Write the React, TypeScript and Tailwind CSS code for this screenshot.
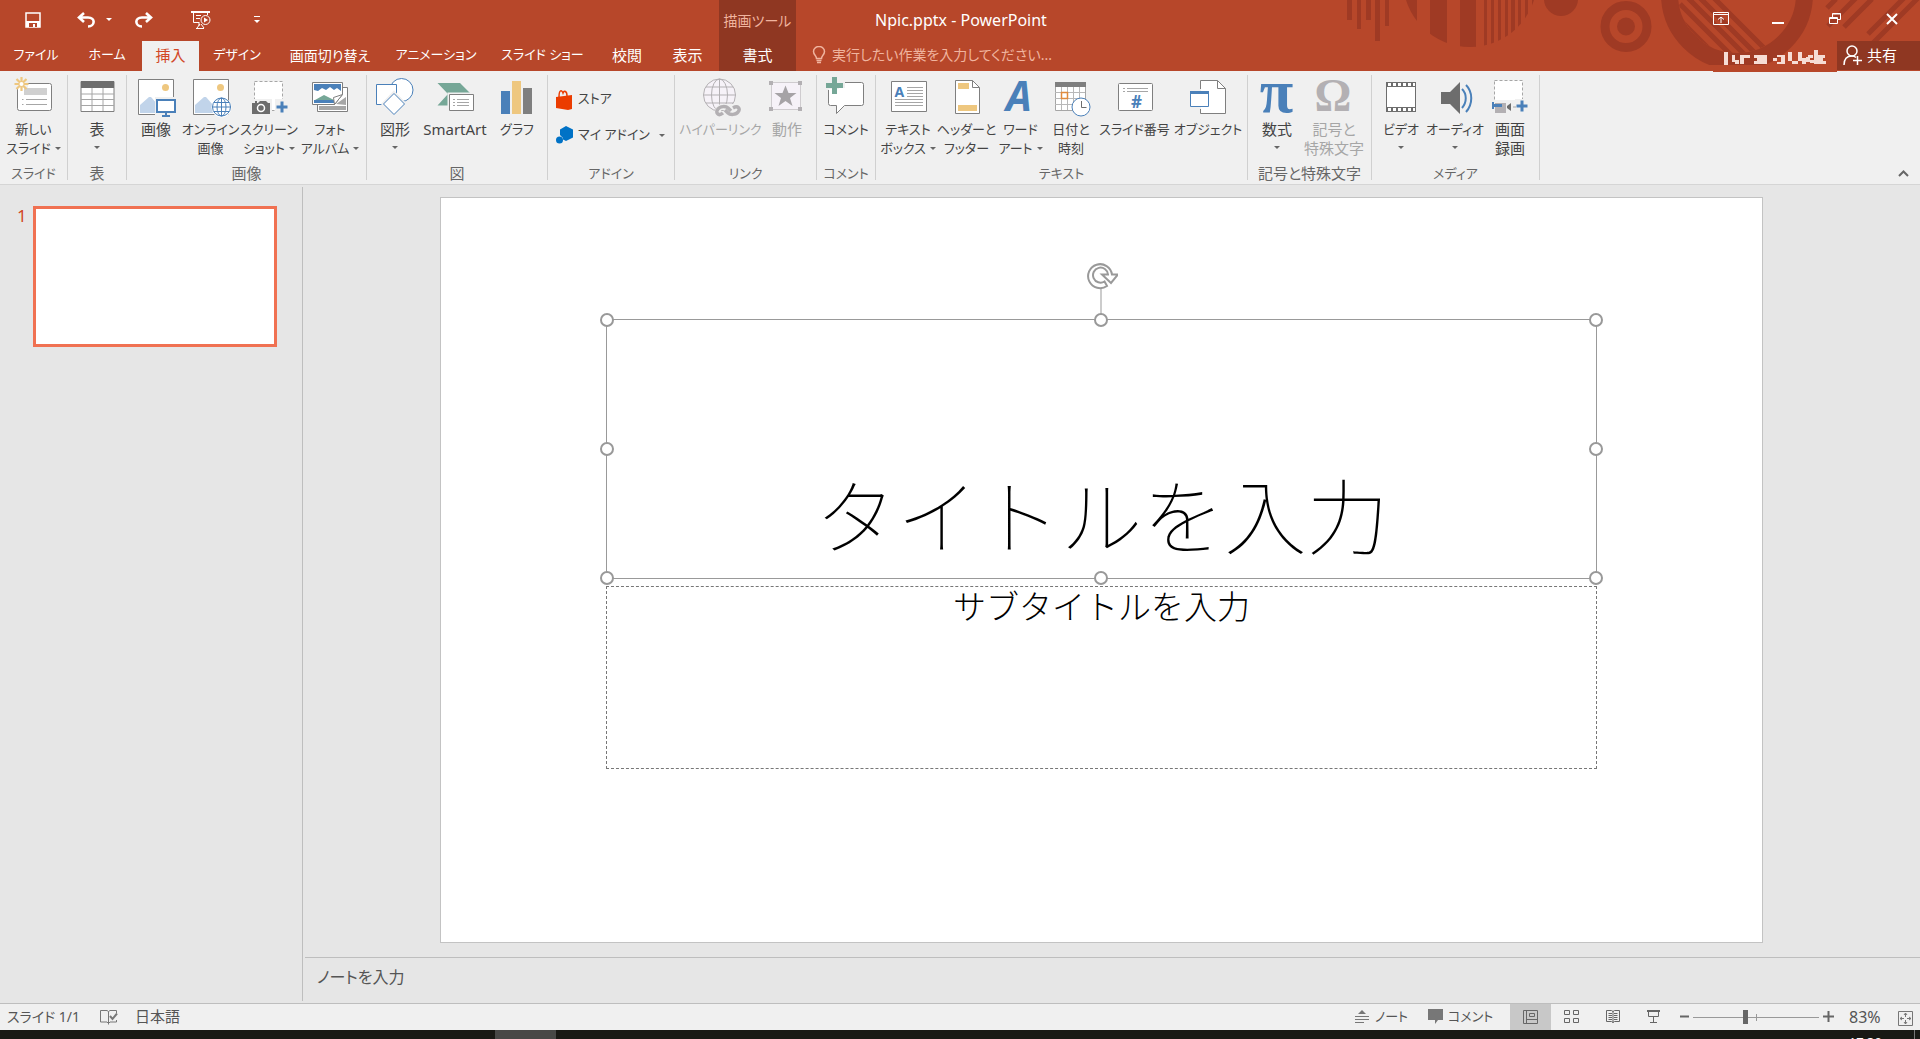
import { useState } from "react";
import type { ReactNode } from "react";

interface ToolProps {
  icon: ReactNode;
  lines: string[];
  width: string;
  small?: boolean;
  caret?: boolean;
  disabled?: boolean;
}

const Caret = ({ className = "" }: { className?: string }) => (
  <svg width="6" height="3" viewBox="0 0 6 3" className={`inline-block shrink-0 ${className}`} aria-hidden="true">
    <path d="M0 0h6L3 3z" fill="currentColor" />
  </svg>
);

const Icon = ({ children }: { children: ReactNode }) => (
  <svg width="40" height="40" viewBox="0 0 40 40" fill="none" className="block overflow-visible" aria-hidden="true">
    {children}
  </svg>
);

const Tool = ({ icon, lines, width, small, caret, disabled }: ToolProps) => (
  <button
    disabled={disabled}
    className={`flex shrink-0 flex-col items-center pt-[2px] ${width} ${disabled ? "text-[#a6a6a6]" : "text-[#444444]"}`}
  >
    {icon}
    <span
      className={`mt-[3px] flex flex-col items-center whitespace-nowrap leading-[19px] ${small ? "text-[13px]" : "text-[15px]"}`}
    >
      {lines.map((line, i) => (
        <span key={line} className="flex h-[19px] items-center">
          {line}
          {caret && i === 1 && <Caret className="ml-1 text-[#666666]" />}
        </span>
      ))}
      {caret && lines.length === 1 && (
        <span className="flex h-[19px] items-center pb-[2px]">
          <Caret className="text-[#666666]" />
        </span>
      )}
    </span>
  </button>
);

const Group = ({
  label,
  width,
  small,
  children,
}: {
  label: string;
  width: string;
  small?: boolean;
  children: ReactNode;
}) => (
  <section
    aria-label={label}
    className={`flex h-[105px] shrink-0 flex-col justify-between border-r border-[#d0d0d0] ${width}`}
  >
    <div className="flex">{children}</div>
    <div
      className={`-mb-px whitespace-nowrap text-center leading-[15px] text-[#666666] ${small ? "text-[13px]" : "text-[15px]"}`}
    >
      {label}
    </div>
  </section>
);

const Picture = () => (
  <>
    <path d="M2.5 2.5h35v35h-35z" fill="#fff" stroke="#7f7f7f" />
    <circle cx="29.5" cy="10.5" r="3.5" fill="#eec77f" />
    <path d="M4 36V28l9-8h2l14 16z" fill="#c1d4ea" />
  </>
);

const Globe = ({ cx, cy, r, color, fill }: { cx: number; cy: number; r: number; color: string; fill: string }) => (
  <g stroke={color} fill="none">
    <circle cx={cx} cy={cy} r={r} fill={fill} />
    <ellipse cx={cx} cy={cy} rx={r / 2} ry={r} />
    <path
      d={`M${cx - r} ${cy}h${r * 2}M${cx} ${cy - r}v${r * 2}M${cx - r * 0.86} ${cy - r / 2}h${r * 1.72}M${cx - r * 0.86} ${cy + r / 2}h${r * 1.72}`}
    />
  </g>
);

const NewSlideIcon = () => (
  <Icon>
    <rect x="3.5" y="6.5" width="34" height="27" rx="2" fill="#fff" stroke="#7f7f7f" />
    <path d="M10 11h23v7H10z" fill="#d0d0d0" />
    <path d="M8 22.500h1.500M8 27.500h1.500M12 22.500h21M12 27.500h21" stroke="#a6a6a6" />
    <path d="M0 0h14v11H0z" fill="#f0f0f0" />
    <path d="M7.500 0v14M.500 7h14M2.500 2l10 10M12.500 2l-10 10" stroke="#eec77f" strokeWidth="2.200" />
    <circle cx="7.500" cy="7" r="2" fill="#fff" />
  </Icon>
);

const TableIcon = () => (
  <Icon>
    <path d="M4 4.500h33v30H4z" fill="#fff" stroke="#7f7f7f" />
    <path d="M4 4h33v7H4z" fill="#6d6d6d" />
    <path d="M15 11v23M26 11v23M4 17h33M4 22.500h33M4 28.500h33" stroke="#a6a6a6" />
  </Icon>
);

const PictureIcon = () => (
  <Icon>
    <Picture />
    <path d="M19 20h21v18H19z" fill="#f0f0f0" />
    <path d="M21 23h18v12H21z" fill="#fff" stroke="#4a80b9" strokeWidth="2" />
    <path d="M30 36v3M26 39h8" stroke="#4a80b9" strokeWidth="2" />
  </Icon>
);

const OnlinePictureIcon = () => (
  <Icon>
    <Picture />
    <circle cx="30.500" cy="30.500" r="10" fill="#fff" />
    <Globe cx={30.5} cy={30} r={9} color="#4a80b9" fill="#fff" />
  </Icon>
);

const ScreenshotIcon = () => (
  <Icon>
    <path d="M5.500 4.500h28v29h-28z" fill="#fff" stroke="#a6a6a6" strokeDasharray="3 2" />
    <path d="M0 22h23v18H0zM26 22h14v15H26z" fill="#f0f0f0" />
    <path d="M3 26h3v-2h2v2h1l2-2h6l2 2h2v11H3z" fill="#6d6d6d" />
    <circle cx="12" cy="31" r="3.500" stroke="#fff" strokeWidth="1.500" />
    <path d="M33 24.500v11M27.500 30h11" stroke="#4a80b9" strokeWidth="3" />
  </Icon>
);

const AlbumIcon = () => (
  <Icon>
    <path d="M7.500 10.500h30v24h-30z" fill="#fff" stroke="#7f7f7f" />
    <path d="M9 29h27v4H9zM36 20v8l-10-1z" fill="#a6a6a6" />
    <path d="M2.500 5.500h30v12l-8 10h-22z" fill="#fff" stroke="#7f7f7f" />
    <path d="M4 7h27v7l-4-3-3 2-4-3-4 3-4-2-4 3-4-1z" fill="#4a80b9" />
    <path d="M5 23l9-5 10 5z" fill="#76a797" />
    <path d="M4 23h20v3H4z" fill="#4a80b9" />
    <path d="M24.500 27.500l-1-7 9-3z" fill="#fff" stroke="#7f7f7f" />
  </Icon>
);

const ShapesIcon = () => (
  <Icon>
    <circle cx="26.500" cy="13" r="11.500" fill="#fff" stroke="#4a80b9" />
    <path d="M1.500 7.500h20v20h-20z" fill="#fff" stroke="#4a80b9" />
    <path d="M19 15.500L30 27 19 38 8 27z" fill="#fff" stroke="#f0f0f0" strokeWidth="3" />
    <path d="M19 16.500L29.500 27 19 37.500 8.500 27z" fill="#fff" stroke="#4a80b9" />
  </Icon>
);

const SmartArtIcon = () => (
  <Icon>
    <path d="M2.500 6H25l11 11-11 11.500H2.500L13 17z" fill="#76a797" />
    <path d="M12.500 15.500h27v20h-27z" fill="#f0f0f0" />
    <path d="M14.500 17.500h24v16h-24z" fill="#fff" stroke="#7f7f7f" />
    <path d="M18 22.500h2M18 25.500h2M18 28.500h2M22 22.500h12M22 25.500h12M22 28.500h12" stroke="#a6a6a6" />
  </Icon>
);

const ChartIcon = () => (
  <Icon>
    <path d="M4 14h9v23H4z" fill="#4a80b9" />
    <path d="M15 4h9v33h-9z" fill="#eec77f" />
    <path d="M26 11h9v26h-9z" fill="#7f7f7f" />
  </Icon>
);

const HyperlinkIcon = () => (
  <Icon>
    <Globe cx={18.5} cy={18} r={16} color="#b3b0b3" fill="#f6f2f8" />
    <g stroke="#f0f0f0" strokeWidth="6">
      <rect x="17" y="30" width="12" height="8" rx="4" />
      <rect x="26" y="30" width="12" height="8" rx="4" />
    </g>
    <g stroke="#b3b0b3" strokeWidth="3.500">
      <path d="M22 36c-5 4-8-1-5-4 2-3 8-3 10-1l3 3" />
      <path d="M32 31c5-3 8 1 5 4-2 3-8 3-10 1l-3-3" />
    </g>
  </Icon>
);

const ActionIcon = () => (
  <Icon>
    <path d="M4.500 5.500h29v27h-29z" fill="#f6f2f8" stroke="#cfcccf" />
    <path d="M2 4h4v4H2zM31 4h4v4h-4zM2 30h4v4H2zM31 30h4v4h-4z" fill="#b3b0b3" />
    <path d="M18.500 8.500l3 7.500h8l-6.500 5 2.500 8-7-5-7 5 2.500-8-6.500-5h8z" fill="#a6a3a6" />
  </Icon>
);

const CommentIcon = () => (
  <Icon>
    <path
      d="M4.500 5.500h31a2 2 0 0 1 2 2v19a2 2 0 0 1-2 2h-17l-8 8v-8h-6a2 2 0 0 1-2-2v-19a2 2 0 0 1 2-2z"
      fill="#fff"
      stroke="#7f7f7f"
    />
    <path d="M0 0h19v13H0z" fill="#f0f0f0" />
    <path d="M3 12h10v-1h6v2H3z" fill="#fff" />
    <path d="M6 0h5v6h6v5h-6v6H6v-6H0V6h6z" fill="#76a797" />
  </Icon>
);

const TextBoxIcon = () => (
  <Icon>
    <path d="M3.500 4.500h35v30h-35z" fill="#fff" stroke="#7f7f7f" />
    <text x="6.500" y="20" fontSize="14" fontWeight="bold" fill="#4a80b9" fontFamily="Noto Sans">
      A
    </text>
    <path d="M19 10.500h16M19 13.500h16M19 16.500h16M19 19.500h16M7 22.500h28M7 25.500h28M7 28.500h28" stroke="#a6a6a6" />
  </Icon>
);

const HeaderIcon = () => (
  <Icon>
    <path d="M8.500 3.500h17l7 7v26h-24z" fill="#fff" stroke="#7f7f7f" />
    <path d="M25.500 3.500v7h7" stroke="#7f7f7f" />
    <path d="M11 6h11v6H11zM11 28h19v6H11z" fill="#eec77f" />
  </Icon>
);

const WordArtIcon = () => (
  <Icon>
    <text x="5" y="34" fontSize="41" fontWeight="bold" fontStyle="italic" fill="#4a80b9" fontFamily="Noto Sans">
      A
    </text>
  </Icon>
);

const DateIcon = () => (
  <Icon>
    <path d="M4.500 5.500h30v28h-30z" fill="#fff" stroke="#a6a6a6" />
    <path d="M4 5h31v5H4z" fill="#7f7f7f" />
    <path d="M10.500 10v23M16.500 10v23M22.500 10v23M28.500 10v23M4 15.500h30M4 21.500h30M4 27.500h30" stroke="#b8b8b8" />
    <path d="M10.500 15.500h6v6h-6z" fill="#fff" stroke="#e08a3c" strokeWidth="1.500" />
    <circle cx="30" cy="30" r="9" fill="#fff" stroke="#4a80b9" />
    <path d="M30.500 24v6.500h5" stroke="#6d6d6d" />
  </Icon>
);

const SlideNumberIcon = () => (
  <Icon>
    <rect x="3.500" y="6.500" width="34" height="27" rx="1" fill="#fff" stroke="#7f7f7f" />
    <path d="M8 11.500h2M8 14.500h2M12 11.500h21M12 14.500h21" stroke="#a6a6a6" />
    <text x="21.500" y="31" fontSize="17" textAnchor="middle" fontWeight="bold" fill="#4a80b9" fontFamily="Noto Sans">
      #
    </text>
  </Icon>
);

const ObjectIcon = () => (
  <Icon>
    <path d="M12.500 3.500h17l8 8v25h-25z" fill="#fff" stroke="#7f7f7f" />
    <path d="M29.500 3.500v8h8" stroke="#7f7f7f" />
    <path d="M1 12h22v20H1z" fill="#f0f0f0" />
    <path d="M13 12h10v20H13z" fill="#fff" />
    <path d="M2.500 14.500h18v15h-18z" fill="#fff" stroke="#4a80b9" />
    <path d="M2 14h19v3H2z" fill="#4a80b9" />
  </Icon>
);

const EquationIcon = () => (
  <Icon>
    <text x="19.500" y="35" fontSize="61" textAnchor="middle" fontWeight="bold" fill="#4a80b9" fontFamily="Liberation Serif">
      π
    </text>
  </Icon>
);

const SymbolIcon = () => (
  <Icon>
    <text x="19" y="34" fontSize="46" textAnchor="middle" fontWeight="bold" fill="#b3b0b3" fontFamily="Liberation Serif">
      Ω
    </text>
  </Icon>
);

const VideoIcon = () => (
  <Icon>
    <path d="M5 5h30v30H5z" fill="#6d6d6d" />
    <path d="M6 10h28v20H6z" fill="#fff" />
    <path d="M7 7.500h27M7 32.500h27" stroke="#fff" strokeWidth="3" strokeDasharray="3 2" />
  </Icon>
);

const AudioIcon = () => (
  <Icon>
    <path d="M6 15h9L25 5v32L15 27H6z" fill="#6d6d6d" />
    <path d="M27 12c5 5 5 13 0 19M31 8c7 7 7 19 0 27" stroke="#4a80b9" strokeWidth="2" />
  </Icon>
);

const RecordIcon = () => (
  <Icon>
    <path d="M4.500 3.500h28v24h-28z" fill="#fff" stroke="#a6a6a6" strokeDasharray="3 2" />
    <path d="M1 23h24v14H1zM25 22h15v14H25z" fill="#f0f0f0" />
    <path d="M5 26h11v10H5z" fill="#b3b0b3" />
    <path d="M2 25v7h2v-2h8v-3H4v-2z" fill="#4a80b9" />
    <path d="M17 29l4-3v8l-4-3z" fill="#6d6d6d" />
    <path d="M23 30h3" stroke="#a6a6a6" />
    <path d="M32 23.500v11M26.500 29h11" stroke="#4a80b9" strokeWidth="3" />
  </Icon>
);

const TitleArt = () => (
  <svg
    width="580"
    height="71"
    viewBox="1340 0 580 71"
    fill="none"
    className="pointer-events-none absolute right-0 top-0"
    aria-hidden="true"
  >
    <defs>
      <clipPath id="stripes">
        <circle cx="1470" cy="-20" r="67" />
      </clipPath>
      <clipPath id="ring">
        <circle cx="1737" cy="-6" r="59" />
      </clipPath>
      <clipPath id="band">
        <path d="M1640 0h280v65h-280z" />
      </clipPath>
    </defs>
    <g fill="#9f3a24">
      <path d="M1347 0h5v20h-5zM1357 0h4v29h-4zM1366 0h5v20h-5zM1375 0h5v41h-5zM1385 0h4v26h-4z" />
      <g clipPath="url(#stripes)">
        <path d="M1400 0h17v60h-17zM1430 0h17v60h-17zM1460 0h16v60h-16zM1484 0h3v60h-3zM1491 0h3v60h-3zM1498 0h3v60h-3zM1505 0h3v60h-3zM1511 0h4v60h-4zM1518 0h3v60h-3zM1525 0h3v60h-3zM1532 0h3v60h-3z" />
      </g>
      <circle cx="1561" cy="-1" r="17" />
      <circle cx="1626" cy="26.500" r="9" />
    </g>
    <g stroke="#9f3a24">
      <circle cx="1626" cy="26.500" r="21" strokeWidth="9" />
      <g clipPath="url(#band)">
        <circle cx="1737" cy="-6" r="67.500" strokeWidth="17" />
        <path d="M1827 8l9-9M1828 26l28-28M1844 27l28-28M1868 34l36-36M1872 44l46-46" strokeWidth="5" />
      </g>
      <g clipPath="url(#ring)" strokeWidth="5">
        <path d="M1674 14l60 60M1680 4l70 70M1687-3l70 70M1697-5l70 70M1711-5l70 70" />
      </g>
    </g>
  </svg>
);

const ACCOUNT_BLOCKS =
  "M11 0h4v13h-4zM19 3h3v7h-3zM22 8h4v4h-4zM27 3h10v3H27zM27 6h4v6h-4zM41 3h13v3H41zM44 6h10v3H44zM41 9h13v3H41zM60 6h4v3h-4zM68 3h4v9h-4zM64 3h4v2h-4zM64 10h4v2h-4zM75 0h4v9h-4zM79 9h6v3h-6zM85 0h4v7h-4zM85 7h4v2h-4zM89 6h4v6h-4zM93 5h4v5h-4zM95 3h5v3h-5zM97 8h7v3h-7zM101-2h4v14h-4zM105 3h7v3h-7zM105 6h5v3h-5zM105 9h8v3h-8z";

const QuickAccess = () => (
  <div className="flex h-[41px] w-[719px] items-center pb-[2px] text-white">
    <button aria-label="上書き保存" className="ml-[13px] flex w-10 justify-center">
      <svg width="16" height="16" viewBox="0 0 16 16" fill="none">
        <path d="M1 1h14v14H1z" stroke="#fff" strokeWidth="1.500" />
        <path d="M1 9h14v6H1z" fill="#fff" />
        <path d="M4 11h8v4H4z" fill="#b7472a" />
        <path d="M8 12h2v3H8z" fill="#fff" />
      </svg>
    </button>
    <button aria-label="元に戻す" className="ml-[15px] flex w-9 justify-center">
      <svg width="18" height="16" viewBox="0 0 18 16" fill="none">
        <path d="M7 1L2 5.500 7 10M2 5.500h9c8 0 7 9 0 9" stroke="#fff" strokeWidth="2.600" />
      </svg>
    </button>
    <button aria-label="元に戻すの一覧" className="flex w-[10px] justify-center">
      <Caret />
    </button>
    <button aria-label="やり直し" className="ml-[10px] flex w-10 justify-center">
      <svg width="18" height="16" viewBox="0 0 18 16" fill="none">
        <path d="M11 1l5 4.500-5 4.500M16 5.500H7c-8 0-7 9 0 9" stroke="#fff" strokeWidth="2.600" />
      </svg>
    </button>
    <button aria-label="先頭から開始" className="ml-[17px] flex w-10 justify-center">
      <svg width="20" height="18" viewBox="0 0 20 18" fill="none" stroke="#fff">
        <path d="M0 1h19" strokeWidth="2" />
        <path d="M2.500 2v9.500h6M16.500 2v2M5 4.500h5M5 7.500h4M8 12v3M5 17.500h8M9 13l-3 4M10 13l3 4" />
        <circle cx="14.500" cy="9" r="4.500" />
        <path d="M13 6.500v5l4-2.500z" fill="#fff" stroke="none" />
      </svg>
    </button>
    <button aria-label="クイック アクセス ツール バーのカスタマイズ" className="ml-[26px] flex w-5 flex-col items-center gap-[3px]">
      <span className="h-px w-[6px] bg-white" />
      <Caret />
    </button>
  </div>
);

const WindowControls = () => (
  <div className="relative ml-auto flex h-[41px] items-center pb-[4px]">
    <button aria-label="リボンの表示オプション" className="flex w-[57px] justify-center">
      <svg width="16" height="13" viewBox="0 0 16 13" fill="none" stroke="#fff">
        <path d="M.500.500h15v12H.500zM.500 2.500h15M8 11V5M5 7.500L8 5l3 2.500" />
      </svg>
    </button>
    <button aria-label="最小化" className="flex w-[57px] justify-center">
      <svg width="12" height="12" viewBox="0 0 12 12">
        <path d="M0 9h12v2H0z" fill="#fff" />
      </svg>
    </button>
    <button aria-label="元に戻す (縮小)" className="flex w-[57px] justify-center">
      <svg width="12" height="13" viewBox="0 0 12 13" fill="none" stroke="#fff">
        <path d="M.500 5.500h8v6h-8zM.500 6.500h8M3.500 5V1.500h8v6H9M3.500 2h8" />
      </svg>
    </button>
    <button aria-label="閉じる" className="flex w-[57px] justify-center">
      <svg width="12" height="12" viewBox="0 0 12 12" fill="none">
        <path d="M1 1l10 10M11 1L1 11" stroke="#fff" strokeWidth="2" />
      </svg>
    </button>
  </div>
);

const tabs = [
  { name: "ファイル", cls: "w-[72px] text-[13px]" },
  { name: "ホーム", cls: "w-[70px] text-[13px]" },
  { name: "挿入", cls: "w-[57px] text-[15px]" },
  { name: "デザイン", cls: "w-[76px] text-[13px]" },
  { name: "画面切り替え", cls: "w-[110px] text-[14px]" },
  { name: "アニメーション", cls: "w-[102px] text-[13px]" },
  { name: "スライド ショー", cls: "w-[111px] text-[13px]" },
  { name: "校閲", cls: "w-[58px] text-[15px]" },
  { name: "表示", cls: "w-[63px] text-[15px]" },
  { name: "書式", cls: "w-[77px] text-[15px] bg-[#8f3722]" },
];

const TitleBar = () => {
  const [active, setActive] = useState("挿入");

  return (
    <header className="relative bg-[#b7472a] text-white">
      <TitleArt />
      <div className="relative flex h-[41px] items-center">
        <QuickAccess />
        <div className="flex h-full w-[77px] items-center justify-center bg-[#8f3722] text-[14px] text-[#f0b49f]">
          描画ツール
        </div>
        <h1 className="ml-[79px] whitespace-nowrap pb-px text-[16px]">Npic.pptx - PowerPoint</h1>
        <WindowControls />
      </div>
      <div className="relative flex h-[30px]">
        <nav className="flex shrink-0" aria-label="リボン タブ">
          {tabs.map((tab) => (
            <button
              key={tab.name}
              onClick={() => setActive(tab.name)}
              className={`flex h-full items-center justify-center whitespace-nowrap pb-[2px] ${tab.cls} ${
                tab.name === active ? "bg-[#f0f0f0] text-[#d24726]" : ""
              }`}
            >
              {tab.name}
            </button>
          ))}
        </nav>
        <label className="ml-4 flex items-center gap-[6px] pb-[2px]">
          <svg width="14" height="18" viewBox="0 0 14 18" fill="none" stroke="#f0b49f" strokeWidth="1.500">
            <path d="M4.500 12.500c0-3-3-3.500-3-7a5.500 5 0 0 1 11 0c0 3.500-3 4-3 7zM4.500 14.500h5M5 16.500h4" />
          </svg>
          <span className="sr-only">操作アシスト</span>
          <input
            placeholder="実行したい作業を入力してください..."
            className="h-[28px] w-[260px] bg-transparent text-[14px] leading-[28px] outline-none placeholder:text-[#f0b49f]"
          />
        </label>
        <div className="ml-auto flex">
          <svg width="124" height="31" viewBox="0 0 124 31" className="block" role="img" aria-label="アカウント">
            <path d="M0 26h124v5H0z" fill="#b7472a" />
            <path d={ACCOUNT_BLOCKS} fill="#f6dcd4" transform="translate(0 11)" />
          </svg>
          <button className="flex h-[29px] w-[83px] items-center gap-1 bg-[#8f3722] pl-[6px] text-[15px]">
            <svg width="20" height="21" viewBox="0 0 20 21" fill="none" stroke="#fff" strokeWidth="1.500">
              <circle cx="9" cy="6" r="5" />
              <path d="M1 20c0-6 3-9 8-9 2 0 3 .500 4 1.500M14.500 11v9M10 15.500h9" />
            </svg>
            共有
          </button>
        </div>
      </div>
    </header>
  );
};

const Ribbon = () => (
  <div className="flex border-b border-[#d5d5d5] bg-[#f0f0f0] py-1">
    <Group label="スライド" width="w-[68px]" small>
      <Tool icon={<NewSlideIcon />} lines={["新しい", "スライド"]} width="w-[67px]" small caret />
    </Group>
    <Group label="表" width="w-[59px]">
      <Tool icon={<TableIcon />} lines={["表"]} width="w-[58px]" caret />
    </Group>
    <Group label="画像" width="w-[240px] [&>div:first-child]:pl-[3px]">
      <Tool icon={<PictureIcon />} lines={["画像"]} width="w-[52px]" />
      <Tool icon={<OnlinePictureIcon />} lines={["オンライン", "画像"]} width="w-[57px]" small />
      <Tool icon={<ScreenshotIcon />} lines={["スクリーン", "ショット"]} width="w-[60px]" small caret />
      <Tool icon={<AlbumIcon />} lines={["フォト", "アルバム"]} width="w-[62px]" small caret />
    </Group>
    <Group label="図" width="w-[181px] [&>div:first-child]:pl-[4px]">
      <Tool icon={<ShapesIcon />} lines={["図形"]} width="w-[48px]" caret />
      <Tool icon={<SmartArtIcon />} lines={["SmartArt"]} width="w-[72px]" />
      <Tool icon={<ChartIcon />} lines={["グラフ"]} width="w-[52px]" small />
    </Group>
    <Group label="アドイン" width="w-[127px]" small>
      <div className="flex flex-col items-start gap-[6px] pl-2 pt-[9px] text-[13px] text-[#444444]">
        <button className="flex h-[30px] items-center gap-[5px]">
          <svg width="17" height="21" viewBox="0 0 17 21" fill="none">
            <path d="M3 8c0-8 3-7 4-4 1-3 4-2 4 3" stroke="#eb3c00" strokeWidth="1.500" />
            <path d="M0 8l16-2v14l-4 1L0 19z" fill="#eb3c00" />
          </svg>
          ストア
        </button>
        <button className="flex h-[30px] items-center gap-[5px]">
          <svg width="17" height="18" viewBox="0 0 17 18">
            <path d="M10 0l7 3.500v8L10 15l-3-1.500V12L4 9V3.500z" fill="#0072c6" />
            <circle cx="3.500" cy="14" r="3.500" fill="#0072c6" />
          </svg>
          マイ アドイン
          <Caret className="ml-1 text-[#666666]" />
        </button>
      </div>
    </Group>
    <Group label="リンク" width="w-[142px] [&>div:first-child]:pl-[4px]" small>
      <Tool icon={<HyperlinkIcon />} lines={["ハイパーリンク"]} width="w-[83px]" small disabled />
      <Tool icon={<ActionIcon />} lines={["動作"]} width="w-[50px]" disabled />
    </Group>
    <Group label="コメント" width="w-[59px]" small>
      <Tool icon={<CommentIcon />} lines={["コメント"]} width="w-[58px]" small />
    </Group>
    <Group label="テキスト" width="w-[372px] [&>div:first-child]:pl-[3px]" small>
      <Tool icon={<TextBoxIcon />} lines={["テキスト", "ボックス"]} width="w-[58px]" small caret />
      <Tool icon={<HeaderIcon />} lines={["ヘッダーと", "フッター"]} width="w-[59px]" small />
      <Tool icon={<WordArtIcon />} lines={["ワード", "アート"]} width="w-[49px]" small caret />
      <Tool icon={<DateIcon />} lines={["日付と", "時刻"]} width="w-[52px]" small />
      <Tool icon={<SlideNumberIcon />} lines={["スライド番号"]} width="w-[75px]" small />
      <Tool icon={<ObjectIcon />} lines={["オブジェクト"]} width="w-[72px]" small />
    </Group>
    <Group label="記号と特殊文字" width="w-[124px] [&>div:first-child]:pl-[5px]">
      <Tool icon={<EquationIcon />} lines={["数式"]} width="w-[48px]" caret />
      <Tool icon={<SymbolIcon />} lines={["記号と", "特殊文字"]} width="w-[66px]" disabled />
    </Group>
    <Group label="メディア" width="w-[168px] [&>div:first-child]:pl-[5px]" small>
      <Tool icon={<VideoIcon />} lines={["ビデオ"]} width="w-[48px]" small caret />
      <Tool icon={<AudioIcon />} lines={["オーディオ"]} width="w-[60px]" small caret />
      <Tool icon={<RecordIcon />} lines={["画面", "録画"]} width="w-[50px]" />
    </Group>
    <button aria-label="リボンを折りたたむ" className="ml-auto mr-[11px] self-end pb-[3px]">
      <svg width="11" height="7" viewBox="0 0 11 7" fill="none">
        <path d="M1 6l4.500-4.500L10 6" stroke="#666" strokeWidth="2" />
      </svg>
    </button>
  </div>
);

const handles = [
  "left-0 top-0",
  "left-1/2 top-0",
  "left-full top-0",
  "left-0 top-1/2",
  "left-full top-1/2",
  "left-0 top-full",
  "left-1/2 top-full",
  "left-full top-full",
];

const Slide = () => (
  <div className="flex aspect-[1322/745] h-full flex-col items-center border border-[#c3c3c3] bg-white pt-[121px] text-black">
    <div className="relative flex h-[260px] w-3/4 items-end justify-center border border-[#999999] pb-[12px]">
      <h2 className="whitespace-nowrap text-[82px] font-thin leading-[100px] [font-feature-settings:normal]">
        タイトルを入力
      </h2>
      {handles.map((pos) => (
        <span
          key={pos}
          className={`absolute size-[14px] -translate-x-1/2 -translate-y-1/2 rounded-full border-2 border-[#999999] bg-white ${pos}`}
        />
      ))}
      <svg
        width="34"
        height="52"
        viewBox="0 0 34 52"
        fill="none"
        stroke="#999"
        strokeWidth="2"
        className="absolute bottom-full left-1/2 mb-[6px] -translate-x-1/2"
        aria-hidden="true"
      >
        <path d="M17 27v25" strokeWidth="1" />
        <path d="M28 12.500A12 12 0 1 0 23 24l-2.500-4.500A7.500 7.500 0 1 1 24 12.500h-6l9 8.500 7-8.500z" />
      </svg>
    </div>
    <div className="mt-[7px] flex h-[183px] w-3/4 justify-center border border-dashed border-[#777777]">
      <p className="whitespace-nowrap text-[33px] font-light leading-[40px] [font-feature-settings:normal]">
        サブタイトルを入力
      </p>
    </div>
  </div>
);

const StatusBar = () => {
  const [zoom, setZoom] = useState(41);

  return (
    <footer className="flex h-[27px] items-center whitespace-nowrap border-t border-[#bebebe] bg-[#f0f0f0] pb-px text-[14px] text-[#555555]">
      <span className="ml-[7px] w-[93px]">スライド 1/1</span>
      <button aria-label="スペル チェック">
        <svg width="18" height="16" viewBox="0 0 18 16" fill="none" stroke="#777">
          <path d="M8.500 14.500L7 13H.500V1.500H7l1.500 1L10 1.500h6.500V4M8.500 2.500v13M8.500 14.500L10 13h6.500v-2" />
          <path d="M10 7l2.500 3L17 4.500" strokeWidth="2" />
        </svg>
      </button>
      <button className="ml-[17px] text-[15px]">日本語</button>
      <div className="ml-auto flex h-full items-center">
        <button className="flex items-center gap-[6px]">
          <svg width="14" height="14" viewBox="0 0 14 14" fill="none" stroke="#777">
            <path d="M7 0l4 4H3z" fill="#777" stroke="none" />
            <path d="M0 6.500h14M0 9.500h14M0 12.500h9" />
          </svg>
          <span className="w-[33px] text-left text-[13px]">ノート</span>
        </button>
        <button className="ml-5 flex items-center gap-[5px]">
          <svg width="15" height="16" viewBox="0 0 15 16">
            <path d="M0 0h15v11h-5l-3 4v-4H0z" fill="#777" />
          </svg>
          <span className="w-[44px] text-left text-[13px]">コメント</span>
        </button>
        <button aria-label="標準" className="ml-[18px] flex h-[26px] w-[41px] items-center justify-center bg-[#c8c8c8]">
          <svg width="15" height="14" viewBox="0 0 15 14" fill="none" stroke="#666">
            <path d="M.500.500h14v13H.500zM3.500.500v13M3.500 9.500h11M6.500 3.500h5v3h-5z" />
          </svg>
        </button>
        <button aria-label="スライド一覧" className="flex w-[41px] justify-center">
          <svg width="15" height="13" viewBox="0 0 15 13" fill="none" stroke="#666">
            <path d="M.500.500h5v4h-5zM9.500.500h5v4h-5zM.500 8.500h5v4h-5zM9.500 8.500h5v4h-5z" />
          </svg>
        </button>
        <button aria-label="閲覧表示" className="flex w-[41px] justify-center">
          <svg width="14" height="13" viewBox="0 0 14 13" fill="none" stroke="#666">
            <path d="M.500.500h5L7 1.500l1.500-1h5v11h-5L7 12.500l-1.500-1h-5zM7 1v12M2.500 3.500H6M2.500 5.500H6M2.500 7.500H6M2.500 9.500H6M8 3.500h3.500M8 5.500h3.500M8 7.500h3.500M8 9.500h3.500" />
          </svg>
        </button>
        <button aria-label="スライド ショー" className="flex w-[41px] justify-center">
          <svg width="13" height="13" viewBox="0 0 13 13" fill="none" stroke="#666">
            <path d="M0 1h13" strokeWidth="2" />
            <path d="M1.500 2v4.500h10V2M6.500 7v5M3 12.500h7" />
          </svg>
        </button>
        <button aria-label="縮小" className="ml-[5px]">
          <svg width="11" height="11" viewBox="0 0 11 11">
            <path d="M1 4.500h9v2H1z" fill="#666" />
          </svg>
        </button>
        <div className="relative ml-[3px] flex h-full w-[126px] items-center">
          <span className="absolute left-0 top-1/2 h-px w-full bg-[#999999]" />
          <span className="absolute left-1/2 top-1/2 h-[7px] w-px -translate-y-[3px] bg-[#999999]" />
          <input
            type="range"
            aria-label="ズーム"
            value={zoom}
            onChange={(e) => setZoom(Number(e.target.value))}
            className="relative h-[15px] w-full appearance-none bg-transparent [&::-webkit-slider-thumb]:h-[14px] [&::-webkit-slider-thumb]:w-[5px] [&::-webkit-slider-thumb]:appearance-none [&::-webkit-slider-thumb]:bg-[#666666]"
          />
        </div>
        <button aria-label="拡大" className="ml-[4px]">
          <svg width="11" height="11" viewBox="0 0 11 11">
            <path d="M0 4.500h4.500V0h2v4.500H11v2H6.500V11h-2V6.500H0z" fill="#666" />
          </svg>
        </button>
        <button className="ml-[15px] w-[49px] text-left text-[16px]">83%</button>
        <button aria-label="ウィンドウに合わせる" className="mr-[7px] mt-1">
          <svg width="15" height="15" viewBox="0 0 15 15" fill="none" stroke="#777">
            <path d="M.500.500h14v14H.500zM7.500 2v4M6 4l1.500-2L9 4M7.500 9v4M6 11l1.500 2L9 11M2 7.500h4M4 6L2 7.500 4 9M9 7.500h4M11 6l2 1.500L11 9" />
          </svg>
        </button>
      </div>
    </footer>
  );
};

const App = () => (
  <div
    lang="ja"
    className="flex h-screen flex-col overflow-hidden bg-[#e6e6e6] font-['Noto_Sans','Noto_Sans_CJK_JP',sans-serif] [font-feature-settings:'palt']"
  >
    <TitleBar />
    <Ribbon />
    <main className="flex min-h-0 flex-1 pb-[2px] pt-[2px]">
      <aside className="flex w-[303px] shrink-0 items-start border-r border-[#bebebe] pl-[17px] pt-[19px]">
        <span className="w-4 text-[17px] leading-[20px] text-[#d24726]">1</span>
        <button aria-label="スライド 1" className="h-[141px] w-[244px] border-[3px] border-[#f07152] bg-white" />
      </aside>
      <div className="ml-[2px] flex min-w-0 flex-1 flex-col">
        <div className="flex min-h-0 flex-1 justify-center pb-[14px] pr-[22px] pt-[10px]">
          <Slide />
        </div>
        <textarea
          aria-label="ノート"
          placeholder="ノートを入力"
          className="h-[44px] resize-none border-t border-[#bebebe] bg-transparent px-3 pt-[7px] text-[16px] leading-[24px] outline-none placeholder:text-[#555555]"
        />
      </div>
    </main>
    <StatusBar />
    <div className="flex h-[9px] items-start overflow-hidden bg-[#191914]">
      <div className="ml-[495px] h-full w-[61px] bg-[#484846]" />
      <span className="ml-auto pt-[5px] text-[13px] leading-[14px] text-white">17:30</span>
      <div className="ml-[32px] mr-[5px] h-full w-px bg-[#777777]" />
    </div>
  </div>
);

export default App;
